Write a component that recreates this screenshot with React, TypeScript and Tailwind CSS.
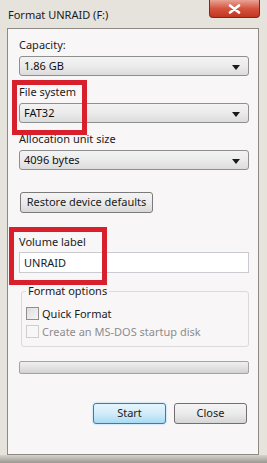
import React from "react";

const font = { fontFamily: '"Noto Sans", "Open Sans", sans-serif' };

function Arrow() {
  return (
    <svg width="8" height="5" viewBox="0 0 8 5" className="absolute right-[8px] top-[8px]">
      <path d="M0 0 L8 0 L4 5 Z" fill="#1a1a1a" />
    </svg>
  );
}

function Select({ value }: { value: string }) {
  return (
    <div className="relative h-[20px] w-[230px] rounded-[3px] border border-[#8e8f8f] bg-gradient-to-b from-[#f3f3f3] via-[#ebebeb] to-[#dcdcdc] pl-[4px] text-[11px] leading-[18px] text-[#111]">
      {value}
      <Arrow />
    </div>
  );
}

export default function App() {
  return (
    <div className="relative h-[463px] w-[267px] overflow-hidden bg-[#e6e2dc] text-[#1b1b1b]" style={font}>
      {/* Title bar */}
      <div className="flex h-[28px] items-start">
        <div className="ml-[8px] mt-[9px] text-[11px] leading-[12px] text-[#1a1a1a]">Format UNRAID (F:)</div>
        <div className="ml-auto mr-[7px] flex h-[18px] w-[51px] items-center justify-center rounded-b-[4px] border border-t-0 border-[#7a2a20] bg-gradient-to-b from-[#e8a294] via-[#d5533f] to-[#c2351f]">
          <svg width="13" height="10" viewBox="0 0 13 10">
            <path d="M2 1.5 L11 8.5 M11 1.5 L2 8.5" stroke="#ffffff" strokeWidth="2.6" strokeLinecap="round" />
          </svg>
        </div>
      </div>

      {/* Client area */}
      <div className="relative ml-[7px] mr-[8px] h-[427px] border border-[#8d8a86] bg-[#f9f6f8] pl-[11px]">
        <div className="mt-[8px] h-[16px] text-[11px] leading-[16px]">Capacity:</div>
        <div className="mt-[3px]"><Select value="1.86 GB" /></div>
        <div className="mt-[8px] h-[16px] text-[11px] leading-[16px]">File system</div>
        <div className="mt-[3px]"><Select value="FAT32" /></div>
        <div className="mt-[8px] h-[16px] text-[11px] leading-[16px]">Allocation unit size</div>
        <div className="mt-[3px]"><Select value="4096 bytes" /></div>

        <div className="ml-[1px] mt-[22px] flex h-[21px] w-[133px] items-center justify-center rounded-[3px] border border-[#7a7a7a] bg-gradient-to-b from-[#f4f4f4] via-[#ebebeb] to-[#d8d8d8] text-[11px]">
          Restore device defaults
        </div>

        <div className="mt-[21px] h-[16px] text-[11px] leading-[16px]">Volume label</div>
        <div className="mt-[2px] h-[21px] w-[230px] border border-[#c9cbd0] bg-white pl-[4px] text-[11px] leading-[19px]">UNRAID</div>

        {/* Format options group */}
        <div className="relative ml-[2px] mt-[18px] h-[56px] w-[228px] rounded-[3px] border border-[#dcdad8]">
          <div className="absolute left-[4px] top-[-9px] bg-[#f9f6f8] px-[2px] text-[11px] leading-[16px]">Format options</div>
          <div className="ml-[4px] mt-[15px] flex h-[13px] items-center">
            <div className="h-[13px] w-[13px] border border-[#8f8f8f] bg-gradient-to-br from-[#dcdcdc] to-[#f7f7f7]" />
            <span className="ml-[3px] text-[11px] leading-[13px]">Quick Format</span>
          </div>
          <div className="ml-[4px] mt-[5px] flex h-[13px] items-center">
            <div className="h-[13px] w-[13px] border border-[#cfcfcf] bg-[#f7f7f7]" />
            <span className="ml-[3px] text-[11px] leading-[13px] text-[#8c8c8c]">Create an MS-DOS startup disk</span>
          </div>
        </div>

        {/* Progress bar */}
        <div className="mt-[14px] h-[13px] w-[230px] rounded-[2px] border border-[#a3a3a3] bg-gradient-to-b from-[#f0f0f0] via-[#e2e2e2] to-[#d2d2d2]" />

        {/* Buttons */}
        <div className="mt-[29px] flex h-[21px] gap-[8px] pl-[74px]">
          <div className="flex h-[21px] w-[73px] items-center justify-center rounded-[3px] border border-[#3d7bad] bg-gradient-to-b from-[#e6f5fd] via-[#d2ecfa] to-[#a9d9f3] text-[11px] shadow-[0_0_2px_#7fd0f5]">
            Start
          </div>
          <div className="flex h-[21px] w-[73px] items-center justify-center rounded-[3px] border border-[#707070] bg-gradient-to-b from-[#f4f4f4] via-[#ebebeb] to-[#d6d6d6] text-[11px]">
            Close
          </div>
        </div>
      </div>

      {/* bottom frame */}
      <div className="h-[8px] bg-gradient-to-b from-[#d8d4cc] to-[#9b9893]" />

      {/* Red annotation boxes */}
      <div className="pointer-events-none absolute left-[12px] top-[80px] h-[55px] w-[75px] border-[5px] border-[#d7202c]" />
      <div className="pointer-events-none absolute left-[9px] top-[227px] h-[58px] w-[98px] border-[5px] border-[#d7202c]" />
    </div>
  );
}
